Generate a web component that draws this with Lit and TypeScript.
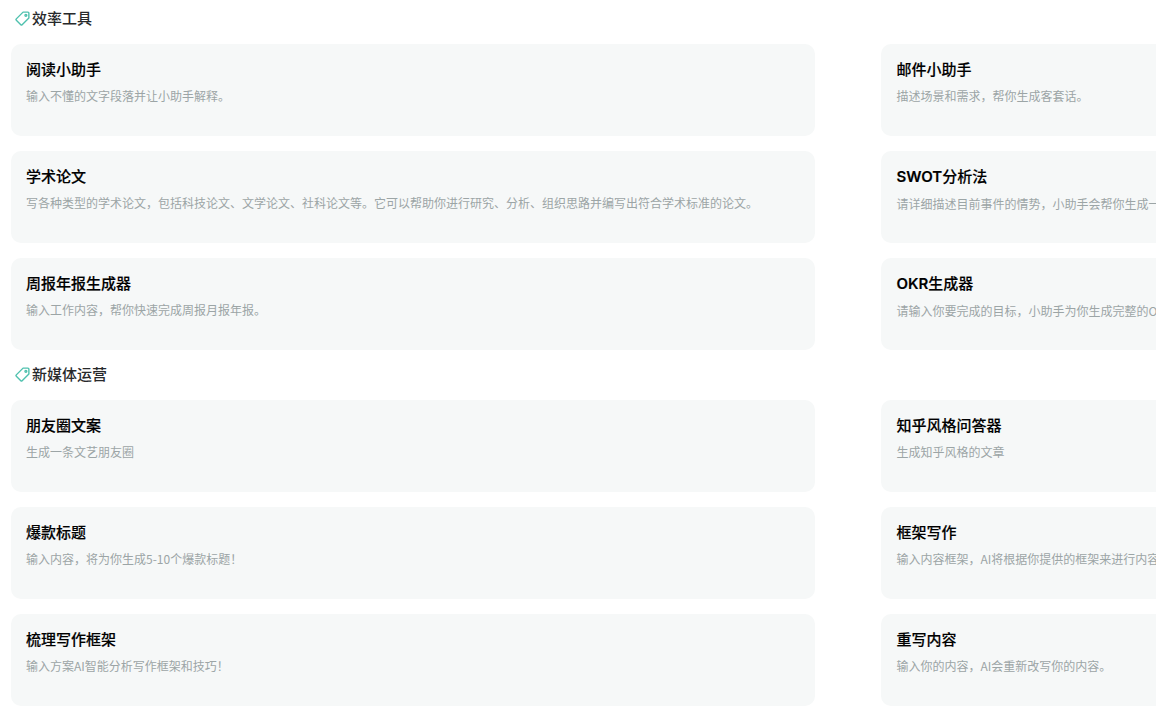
import { LitElement, html, css } from "lit";
import { customElement } from "lit/decorators.js";

type Item = [string, string];
const sections: { name: string; rows: [Item, Item][] }[] = [
  {
    name: "效率工具",
    rows: [
      [["阅读小助手", "输入不懂的文字段落并让小助手解释。"], ["邮件小助手", "描述场景和需求，帮你生成客套话。"]],
      [["学术论文", "写各种类型的学术论文，包括科技论文、文学论文、社科论文等。它可以帮助你进行研究、分析、组织思路并编写出符合学术标准的论文。"], ["SWOT分析法", "请详细描述目前事件的情势，小助手会帮你生成一份完整的SWOT分析报告。"]],
      [["周报年报生成器", "输入工作内容，帮你快速完成周报月报年报。"], ["OKR生成器", "请输入你要完成的目标，小助手为你生成完整的OKR方案。"]],
    ],
  },
  {
    name: "新媒体运营",
    rows: [
      [["朋友圈文案", "生成一条文艺朋友圈"], ["知乎风格问答器", "生成知乎风格的文章"]],
      [["爆款标题", "输入内容，将为你生成5-10个爆款标题！"], ["框架写作", "输入内容框架，AI将根据你提供的框架来进行内容写作。"]],
      [["梳理写作框架", "输入方案AI智能分析写作框架和技巧！"], ["重写内容", "输入你的内容，AI会重新改写你的内容。"]],
    ],
  },
];

@customElement("app-root")
export class AppRoot extends LitElement {
  static styles = css`
    :host {
      display: block;
      width: 1156px;
      height: 713px;
      overflow: hidden;
      background: #fff;
      font-family: "Noto Sans CJK SC", "Noto Sans", sans-serif;
    }
    .page {
      width: 1680px;
      padding: 0 0 0 11px;
      display: flex;
      flex-direction: column;
      gap: 6px;
    }
    .head {
      height: 36px;
      margin-bottom: 8px;
      padding-left: 4px;
      display: flex;
      align-items: center;
      gap: 2px;
      font-size: 15px;
      line-height: 36px;
      font-weight: 500;
      color: #27292b;
    }
    .head svg {
      width: 15px;
      height: 15px;
      flex: none;
    }
    .grid {
      display: grid;
      grid-template-columns: 804px 804px;
      column-gap: 66.4px;
      row-gap: 15px;
    }
    .card {
      height: 92px;
      box-sizing: border-box;
      padding: 14px 15px 15px;
      border-radius: 10px;
      background: #f6f8f8;
      overflow: hidden;
    }
    .title {
      font-size: 15px;
      line-height: 22px;
      font-weight: 500;
      color: #000;
      white-space: nowrap;
      -webkit-text-stroke: 0.15px #000;
    }
    .latin {
      font-family: "Inter", "Noto Sans CJK SC", sans-serif;
      font-weight: 600;
    }
    .desc {
      margin-top: 5px;
      font-size: 12px;
      line-height: 22px;
      color: #9ca5a6;
      white-space: nowrap;
    }
  `;

  private titleParts(t: string) {
    const m = t.match(/^([A-Z]+)(.*)$/);
    return m ? html`<span class="latin">${m[1]}</span>${m[2]}` : t;
  }

  render() {
    return html`<div class="page">
      ${sections.map(
        (s) => html`<section>
          <div class="head">
            <svg viewBox="0 0 16 16" fill="none" stroke="#4fc1ae" stroke-width="1.5" stroke-linejoin="round">
              <path d="M8.6 1.2h5.2a1 1 0 0 1 1 1v5.2L7.6 14.6a1 1 0 0 1-1.4 0L1.4 9.8a1 1 0 0 1 0-1.4z" />
              <circle cx="11.6" cy="4.6" r="1" />
            </svg>
            <span>${s.name}</span>
          </div>
          <div class="grid">
            ${s.rows.flat().map(
              ([t, d]) => html`<div class="card">
                <div class="title">${this.titleParts(t)}</div>
                <div class="desc">${d}</div>
              </div>`
            )}
          </div>
        </section>`
      )}
    </div>`;
  }
}
